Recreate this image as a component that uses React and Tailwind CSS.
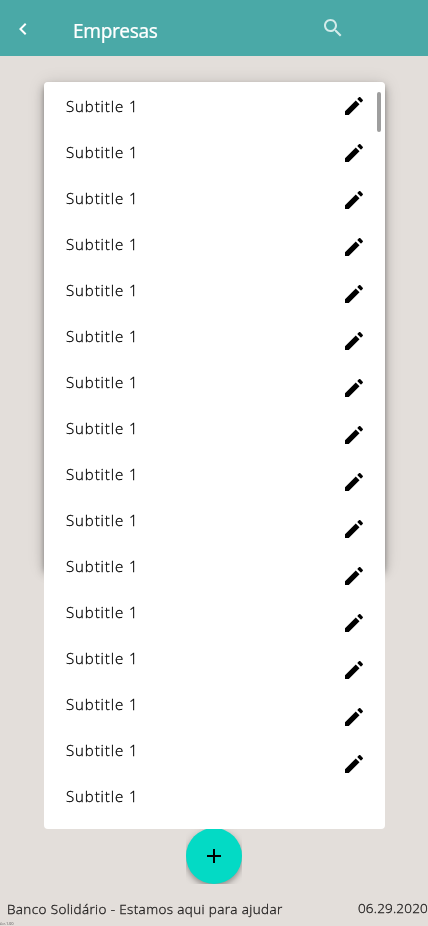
const SUBTITLES = Array.from({ length: 16 }, () => 'Subtitle 1');

function Icon({ d, className }) {
  return (
    <svg viewBox="0 0 24 24" className={className} fill="currentColor" aria-hidden="true">
      <path d={d} />
    </svg>
  );
}

const CHEVRON = 'M15.41 7.41 14 6l-6 6 6 6 1.41-1.41L10.83 12z';
const SEARCH =
  'M15.5 14h-.79l-.28-.27C15.41 12.59 16 11.11 16 9.5 16 5.91 13.09 3 9.5 3S3 5.91 3 9.5 5.91 16 9.5 16c1.61 0 3.09-.59 4.23-1.57l.27.28v.79l5 4.99L20.49 19l-4.99-5zm-6 0C7.01 14 5 11.99 5 9.5S7.01 5 9.5 5 14 7.01 14 9.5 11.99 14 9.5 14z';
const PENCIL =
  'M3 17.25V21h3.75L17.5 10.25l-3.75-3.75L3 17.25zM20.71 7.04c.39-.39.39-1.02 0-1.41l-2.34-2.34c-.39-.39-1.02-.39-1.41 0l-1.3 1.3c-.3.3-.3.6 0 .9l2.85 2.85c.3.3.6.3.9 0l1.3-1.3z';

function Header() {
  return (
    <header className="flex h-14 shrink-0 items-start bg-[#4aa9a7] text-white">
      <button className="mt-[17px] ml-[11px] size-6" aria-label="Voltar">
        <Icon d={CHEVRON} className="size-6" />
      </button>
      <h1 className="mt-[18px] ml-[38px] w-[248px] font-['Noto_Sans',sans-serif] text-[19px] leading-[26px] tracking-[-0.3px] will-change-transform [-webkit-text-stroke:0.2px]">
        Empresas
      </h1>
      <button className="mt-4 size-6 text-[#d3ebea]" aria-label="Buscar">
        <Icon d={SEARCH} className="size-6" />
      </button>
    </header>
  );
}

function CompanyList() {
  return (
    <section className="relative mt-[26px] ml-11 h-[747px] w-[341px] shrink-0">
      <div className="absolute inset-x-0 top-0 h-[487px] rounded shadow-[0_3px_5px_-1px_rgba(0,0,0,0.3),0_5px_10px_rgba(0,0,0,0.28),0_1px_18px_rgba(0,0,0,0.12)]" />
      <div className="relative flex h-full rounded bg-white pl-[22px]">
        <ul className="w-[276px] pt-px will-change-transform">
          {SUBTITLES.map((label, i) => (
            <li
              key={i}
              className="flex h-[46px] items-center text-[15px] font-light tracking-[0.9px] text-black [-webkit-text-stroke:0.3px]"
            >
              {label}
            </li>
          ))}
        </ul>
        <div className="flex w-6 flex-col gap-[23px] pt-3">
          {SUBTITLES.slice(1).map((_, i) => (
            <button key={i} className="size-6 shrink-0 text-black" aria-label="Editar">
              <Icon d={PENCIL} className="size-6" />
            </button>
          ))}
        </div>
        <div className="mt-[10px] ml-[11px] h-10 w-1 rounded-full bg-[#9e9e9e]" />
      </div>
    </section>
  );
}

export default function App() {
  return (
    <div className="flex h-[926px] w-[428px] flex-col overflow-hidden bg-[#e3deda] font-['Open_Sans','Noto_Sans',sans-serif]">
      <Header />
      <CompanyList />
      <div className="flex h-[55px] w-14 shrink-0 items-end self-center overflow-hidden">
        <button
          className="flex size-14 shrink-0 items-center justify-center rounded-full bg-[#03dac5] text-black shadow-[0_3px_5px_rgba(0,0,0,0.25),0_2px_10px_rgba(0,0,0,0.15)]"
          aria-label="Adicionar"
        >
          <Icon d="M19 13h-6v6h-2v-6H5v-2h6V5h2v6h6z" className="size-6" />
        </button>
      </div>
      <footer className="flex h-[42px] shrink-0 flex-col text-[#1c1a1a] will-change-transform">
        <div className="flex h-[37px] items-start justify-between pt-[15px] pl-[7px] text-[13.5px] leading-5 font-light whitespace-nowrap [-webkit-text-stroke:0.3px]">
          <span className="tracking-[0.37px]">Banco Solidário - Estamos aqui para ajudar</span>
          <span className="-mt-px tracking-[0.2px]">06.29.2020</span>
        </div>
        <span className="-ml-px text-[4px] leading-[5px] tracking-[-0.1px] text-[#555]">Ver.1.00</span>
      </footer>
    </div>
  );
}
